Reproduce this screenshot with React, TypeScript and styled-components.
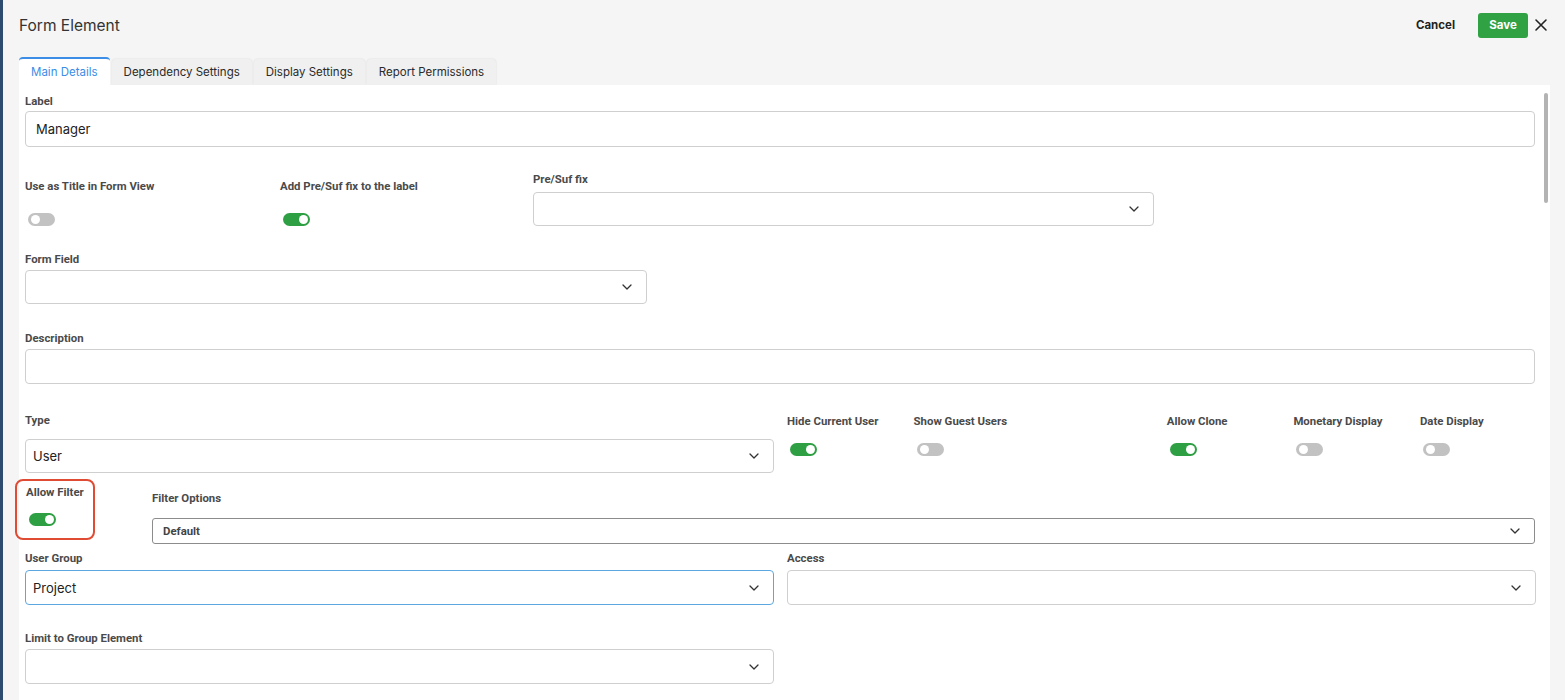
import React from "react";
import styled, {createGlobalStyle} from "styled-components";

const GlobalStyle = createGlobalStyle`
    html, body {
        margin: 0;
        padding: 0;
        background: #f5f5f5;
    }
    body {
        font-family: Inter, "Noto Sans", sans-serif;
        color: #333;
    }
`;

const Page = styled.div`
    height: 100vh;
    overflow: hidden;
    box-sizing: border-box;
    border-left: 3px solid #2d4b6e;
    padding: 0 15px 0 16px;
    display: flex;
    flex-direction: column;
`;

const Header = styled.div`
    height: 50px;
    display: flex;
    align-items: center;
    justify-content: space-between;
`;

const Title = styled.h1`
    margin: 0;
    font-size: 15.5px;
    font-weight: 400;
    color: #333;
`;

const Actions = styled.div`
    display: flex;
    align-items: center;
    margin-right: 2px;
`;

const CancelButton = styled.button`
    border: none;
    background: none;
    font-family: Inter, sans-serif;
    font-size: 11.5px;
    font-weight: 700;
    color: #222;
    padding: 0;
    margin-right: 23px;
    cursor: pointer;
`;

const SaveButton = styled.button`
    width: 50px;
    height: 25px;
    border: none;
    border-radius: 3px;
    background: #30a244;
    color: #fff;
    font-family: Inter, sans-serif;
    font-size: 11.5px;
    font-weight: 700;
    cursor: pointer;
`;

const CloseButton = styled.button`
    border: none;
    background: none;
    padding: 0;
    margin-left: 6px;
    width: 14px;
    height: 14px;
    display: flex;
    cursor: pointer;
`;

const Tabs = styled.div`
    margin-top: 7px;
    display: flex;
    align-items: flex-end;
    gap: 2px;
    height: 28px;
`;

const Tab = styled.div<{ $active?: boolean }>`
    box-sizing: border-box;
    height: ${p => p.$active ? '28px' : '26px'};
    padding: 0 12px;
    display: flex;
    align-items: center;
    font-size: 11.5px;
    border-radius: 4px 4px 0 0;
    background: ${p => p.$active ? '#fff' : '#f0f0f0'};
    color: ${p => p.$active ? '#3b8de6' : '#2a2a2a'};
    border-top: ${p => p.$active ? '2px solid #3b8de6' : 'none'};
    box-shadow: ${p => p.$active ? 'none' : '0 0 2px rgba(0,0,0,0.12)'};
`;

const Panel = styled.div`
    position: relative;
    flex: 1;
    background: #fff;
    padding: 9px 15px 0 6px;
    display: flex;
    flex-direction: column;
`;

const ScrollThumb = styled.div`
    position: absolute;
    right: 2px;
    top: 8px;
    width: 4px;
    height: 110px;
    border-radius: 2px;
    background: #b3b3b3;
`;

const Row = styled.div<{ $top?: number }>`
    display: flex;
    align-items: flex-start;
    margin-top: ${p => p.$top ?? 0}px;
`;

const Field = styled.div<{ $width?: number; $pad?: number; $top?: number; $grow?: boolean }>`
    display: flex;
    flex-direction: column;
    box-sizing: border-box;
    width: ${p => p.$width ? `${p.$width}px` : 'auto'};
    flex: ${p => p.$grow ? '1 1 0' : 'none'};
    padding-top: ${p => p.$pad ?? 0}px;
    margin-top: ${p => p.$top ?? 0}px;
`;

const FieldLabel = styled.label<{ $gap?: number }>`
    font-family: Roboto, "Liberation Sans", sans-serif;
    font-size: 11.4px;
    font-weight: 700;
    line-height: 14px;
    color: #4a4a4a;
    margin-bottom: ${p => p.$gap ?? 4}px;
    white-space: nowrap;
`;

const Box = styled.div<{ $height?: number; $tone?: 'plain' | 'focus' | 'dark'; $inset?: number }>`
    box-sizing: border-box;
    height: ${p => p.$height ?? 35}px;
    border: 1px solid ${p => p.$tone === 'focus' ? '#5ba8e0' : p.$tone === 'dark' ? '#8c8c8c' : '#cfcfcf'};
    border-radius: ${p => p.$tone === 'dark' ? 3 : 4}px;
    background: #fff;
    display: flex;
    align-items: center;
    justify-content: space-between;
    padding: 0 14px 0 ${p => p.$inset ?? 7}px;
    font-size: 13px;
    color: #222;
`;

const BoldValue = styled.span`
    font-family: Roboto, "Liberation Sans", sans-serif;
    font-size: 11.4px;
    font-weight: 700;
    color: #444;
`;

const Chevron = styled.svg`
    width: 10px;
    height: 6px;
    flex: none;
`;

const Track = styled.div<{ $on?: boolean }>`
    position: relative;
    width: 27px;
    height: 13px;
    margin-left: 3px;
    border-radius: 7px;
    background: ${p => p.$on ? '#2f9f44' : '#c2c2c2'};
`;

const Knob = styled.span<{ $on?: boolean }>`
    position: absolute;
    top: 2px;
    left: ${p => p.$on ? '16px' : '3px'};
    width: 9px;
    height: 9px;
    border-radius: 50%;
    background: #fff;
`;

const ToggleGroup = styled.div`
    margin-left: 13px;
    display: grid;
    grid-template-columns: repeat(6, 126.6px);
`;

const Highlight = styled.div`
    box-sizing: border-box;
    width: 80px;
    height: 61px;
    margin-left: -10px;
    border: 2px solid #e04b34;
    border-radius: 8px;
    padding: 4px 0 0 9px;
    display: flex;
    flex-direction: column;
`;

const TwoCols = styled.div<{ $top?: number }>`
    display: grid;
    grid-template-columns: 749px 749px;
    column-gap: 13px;
    margin-top: ${p => p.$top ?? 0}px;
`;

const ChevronIcon = () =>
    <Chevron viewBox="0 0 10 6">
        <polyline points="1,1 5,5 9,1" fill="none" stroke="#333" strokeWidth="1.3" strokeLinecap="round" strokeLinejoin="round"/>
    </Chevron>;

const Toggle = ({on}: { on?: boolean }) =>
    <Track $on={on}><Knob $on={on}/></Track>;

const Select = ({value, height, tone}: { value?: string, height?: number, tone?: 'plain' | 'focus' | 'dark' }) =>
    <Box $height={height} $tone={tone}>
        <span>{value}</span>
        <ChevronIcon/>
    </Box>;

const ToggleField = ({label, on, width, gap, pad}: { label: string, on?: boolean, width?: number, gap: number, pad?: number }) =>
    <Field $width={width} $pad={pad}>
        <FieldLabel $gap={gap}>{label}</FieldLabel>
        <Toggle on={on}/>
    </Field>;

const rightToggles: [string, boolean][] = [
    ['Hide Current User', true],
    ['Show Guest Users', false],
    ['', false],
    ['Allow Clone', true],
    ['Monetary Display', false],
    ['Date Display', false],
];

export default function App() {
    return <>
        <GlobalStyle/>
        <Page>
            <Header>
                <Title>Form Element</Title>
                <Actions>
                    <CancelButton>Cancel</CancelButton>
                    <SaveButton>Save</SaveButton>
                    <CloseButton aria-label="Close">
                        <svg viewBox="0 0 14 14" width="14" height="14">
                            <path d="M2 2 L12 12 M12 2 L2 12" stroke="#222" strokeWidth="1.6" strokeLinecap="round"/>
                        </svg>
                    </CloseButton>
                </Actions>
            </Header>

            <Tabs>
                <Tab $active>Main Details</Tab>
                <Tab>Dependency Settings</Tab>
                <Tab>Display Settings</Tab>
                <Tab>Report Permissions</Tab>
            </Tabs>

            <Panel>
                <ScrollThumb/>

                <Field>
                    <FieldLabel $gap={3}>Label</FieldLabel>
                    <Box $height={36} $inset={10}>Manager</Box>
                </Field>

                <Row $top={25}>
                    <ToggleField label="Use as Title in Form View" width={255} gap={20} pad={7}/>
                    <ToggleField label="Add Pre/Suf fix to the label" on width={253} gap={20} pad={7}/>
                    <Field $width={621}>
                        <FieldLabel $gap={6}>Pre/Suf fix</FieldLabel>
                        <Select height={34}/>
                    </Field>
                </Row>

                <Row $top={26}>
                    <Field $width={622}>
                        <FieldLabel>Form Field</FieldLabel>
                        <Select height={34}/>
                    </Field>
                </Row>

                <Field $top={27}>
                    <FieldLabel>Description</FieldLabel>
                    <Box $height={35}/>
                </Field>

                <Row $top={29}>
                    <Field $width={749}>
                        <FieldLabel $gap={12}>Type</FieldLabel>
                        <Select value="User" height={34}/>
                    </Field>
                    <ToggleGroup>
                        {rightToggles.map(([label, on], idx) => label
                            ? <ToggleField key={idx} label={label} on={on} gap={15} pad={1}/>
                            : <div key={idx}/>)}
                    </ToggleGroup>
                </Row>

                <Row $top={6}>
                    <Highlight>
                        <FieldLabel $gap={14}>Allow Filter</FieldLabel>
                        <Toggle on/>
                    </Highlight>
                    <Field $grow $pad={12} style={{marginLeft: 57}}>
                        <FieldLabel $gap={13}>Filter Options</FieldLabel>
                        <Box $height={26} $tone="dark" $inset={10}>
                            <BoldValue>Default</BoldValue>
                            <ChevronIcon/>
                        </Box>
                    </Field>
                </Row>

                <TwoCols $top={7}>
                    <Field>
                        <FieldLabel $gap={5}>User Group</FieldLabel>
                        <Select value="Project" tone="focus"/>
                    </Field>
                    <Field>
                        <FieldLabel $gap={5}>Access</FieldLabel>
                        <Select/>
                    </Field>
                </TwoCols>

                <TwoCols $top={26}>
                    <Field>
                        <FieldLabel>Limit to Group Element</FieldLabel>
                        <Select/>
                    </Field>
                </TwoCols>
            </Panel>
        </Page>
    </>;
}
